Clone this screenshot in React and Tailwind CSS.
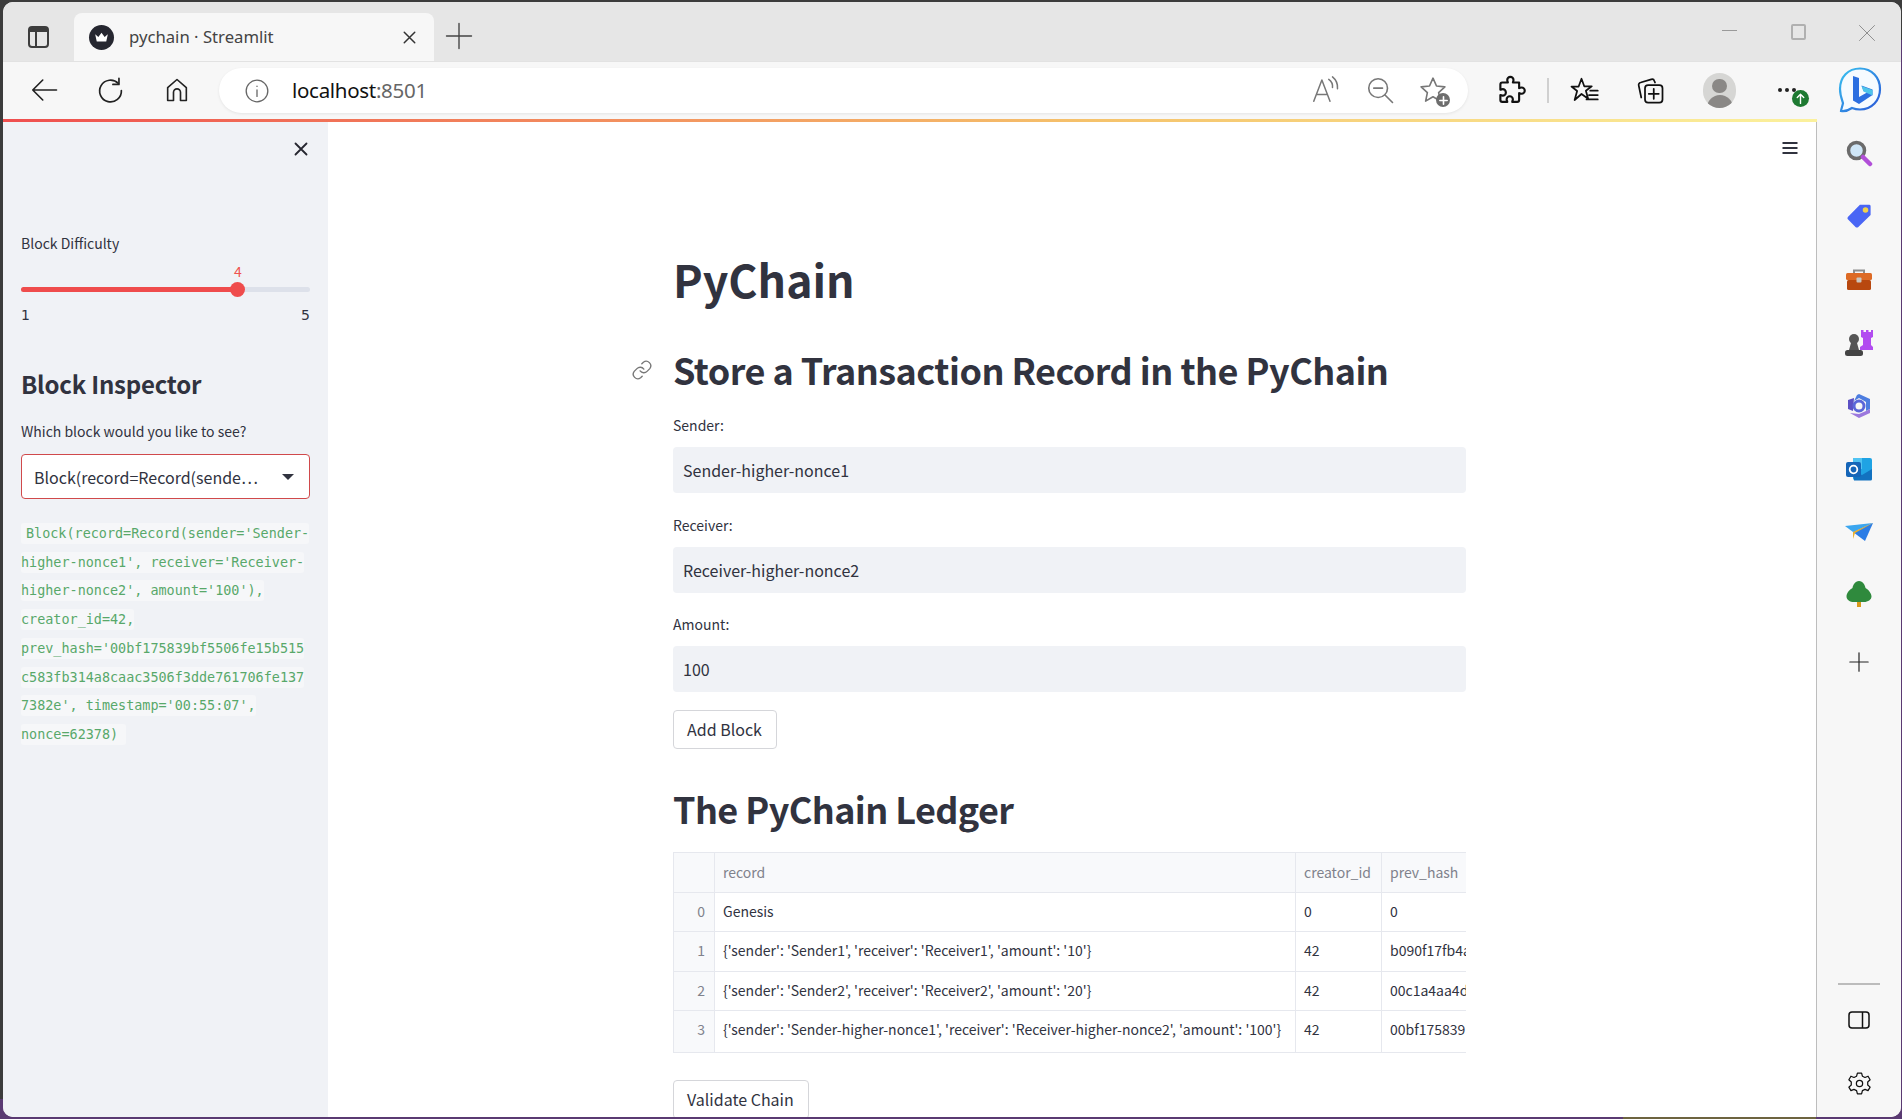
import React from "react";

const SANS = "font-['Noto_Sans_CJK_SC','Source_Sans_Pro',sans-serif]";

function Icon({ className, children, vb = "0 0 24 24", sw = 1.6 }) {
  return (
    <svg className={className} viewBox={vb} fill="none" stroke="currentColor" strokeWidth={sw} strokeLinecap="round" strokeLinejoin="round">
      {children}
    </svg>
  );
}

function ToolIcon({ x, children }) {
  return <div className="absolute top-[70px] h-9 w-9 flex items-center justify-center" style={{ left: x - 18 }}>{children}</div>;
}

function SideIcon({ children, h = 60 }) {
  return <div className="flex items-center justify-center w-full shrink-0" style={{ height: h }}>{children}</div>;
}

function TopBar() {
  return (
    <div className="relative h-[117px] shrink-0">
      <div className="h-[59px] bg-[#e6e6e6] relative">
        <div className="absolute left-[25px] top-[24px] w-[21px] h-[22px] border-2 border-[#3d3d3d] rounded-[4px] bg-[#e6e6e6]">
          <div className="h-[4px] bg-[#3d3d3d]" />
          <div className="absolute left-[5px] top-[2px] bottom-0 w-[2px] bg-[#3d3d3d]" />
        </div>
        <div className="absolute left-[71px] top-[11px] w-[360px] h-[48px] bg-[#f7f7f7] rounded-t-[8px] flex items-center text-[#444]">
          <div className="ml-[15px] w-[25px] h-[25px] rounded-full bg-[#262730] flex items-center justify-center">
            <svg viewBox="0 0 24 24" className="w-[19px] h-[19px]"><path d="M4 8l4 3.5L12 6l4 5.5L20 8l-2 9H6z" fill="#fff" /></svg>
          </div>
          <span className="ml-[15px] text-[16.7px] leading-6 font-['Noto_Sans',sans-serif] text-[#444]">pychain · Streamlit</span>
          <Icon className="w-[21px] h-[21px] ml-auto mr-[14px] text-[#333]" sw={1.7}><path d="M6 6l12 12M18 6L6 18" /></Icon>
        </div>
        <Icon className="absolute left-[441px] top-[19px] w-[30px] h-[30px] text-[#444]" sw={1.1}><path d="M12 2v20M2 12h20" /></Icon>
        <div className="absolute left-[1719px] top-[28px] w-[15px] h-px bg-[#9a9a9a]" />
        <div className="absolute left-[1788px] top-[22px] w-[15px] h-[16px] border-2 border-[#b0b0b0] rounded-[2px]" />
        <Icon className="absolute left-[1854px] top-[21px] w-[20px] h-[20px] text-[#8f8f8f]" sw={1.2}><path d="M3 3l18 18M21 3L3 21" /></Icon>
      </div>
      <div className="h-[58px] bg-[#f7f7f7] relative border-t border-[#e2e2e2]">
        <div className="absolute left-[216px] top-[6px] w-[1249px] h-[45px] rounded-full bg-white shadow-[0_1px_3px_rgba(0,0,0,0.08)] flex items-center">
          <Icon className="ml-[25px] w-[26px] h-[26px] text-[#666]" sw={1.2}><circle cx="12" cy="12" r="10" /><path d="M12 11v6M12 7.5v.3" /></Icon>
          <span className="ml-[22px] pb-[2px] text-[20.5px] leading-6 font-['Noto_Sans',sans-serif] tracking-[-0.3px] text-[#111]">localhost<span className="text-[#666]">:8501</span></span>
        </div>
      </div>
      <ToolIcon x={41}><Icon className="w-[30px] h-[30px] text-[#222]" sw={1.3}><path d="M22 12H3M11 4l-8 8 8 8" /></Icon></ToolIcon>
      <ToolIcon x={107}><Icon className="w-[29px] h-[29px] text-[#222]" sw={1.4}><path d="M18.5 6.2A9 9 0 1 0 21 12" /><path d="M19 2v5h-5" /></Icon></ToolIcon>
      <ToolIcon x={173.5}><Icon className="w-[28px] h-[28px] text-[#222]" sw={1.4}><path d="M4 21V10l8-7 8 7v11h-5v-7a3 3 0 0 0-6 0v7z" /></Icon></ToolIcon>
    </div>
  );
}

function AbsIcons() {
  const t = "absolute";
  return (
    <>
      <Icon className={`${t} left-[1307px] top-[73px] w-[30px] h-[30px] text-[#777]`} sw={1.2}>
        <path d="M3 21L9.500 4 16 21M5.300 15.500h8.400" />
        <path d="M15 3.500a7 7 0 0 1 3 6.500M18 1.500a11 11 0 0 1 4 9.500" />
      </Icon>
      <Icon className={`${t} left-[1362px] top-[73px] w-[30px] h-[30px] text-[#777]`} sw={1.3}><circle cx="10.5" cy="10.5" r="7.5" /><path d="M7 10.5h7M16 16l6 6" /></Icon>
      <div className={`${t} left-[1415px] top-[73px] w-[32px] h-[32px]`}>
        <Icon className="w-[30px] h-[30px] text-[#777]" sw={1.3}><path d="M12 2.5l2.8 6.3 6.7.7-5 4.6 1.4 6.8-5.900-3.5-5.900 3.5 1.4-6.8-5-4.6 6.7-.7z" /></Icon>
        <div className="absolute right-0 bottom-0 w-[14px] h-[14px] rounded-full bg-[#6d6d6d] text-white flex items-center justify-center">
          <Icon className="w-[11px] h-[11px]" sw={3.5}><path d="M12 4v16M4 12h16" /></Icon>
        </div>
      </div>
      <Icon className={`${t} left-[1493px] top-[73px] w-[30px] h-[30px] text-[#111]`} sw={1.7}><path d="M10 4a2.5 2.5 0 0 1 5 0c0 1-.5 1.5-.5 2h5v4.5c.6 0 1.200-.5 2-.5a2.500 2.500 0 0 1 0 5c-.8 0-1.400-.5-2-.5V20a1.500 1.500 0 0 1-1.500 1.500H14c0-.7.5-1.200.5-2a2.500 2.500 0 0 0-5 0c0 .8.5 1.300.5 2H6A1.500 1.500 0 0 1 4.500 20v-4c.6 0 1 .5 1.800.5a2.600 2.600 0 0 0 0-5.200c-.8 0-1.200.5-1.800.5V7.500A1.500 1.500 0 0 1 6 6h4.500c0-.5-.5-1-.5-2z" transform="translate(-1 0)" /></Icon>
      <div className={`${t} left-[1544px] top-[76px] w-[2px] h-[25px] bg-[#d0d0d0]`} />
      <Icon className={`${t} left-[1566px] top-[73px] w-[30px] h-[30px] text-[#111]`} sw={1.4}><path d="M10 3l2.200 6h6l-4.700 3.600 1.800 6.400-5.300-3.800L4.500 20l2-7.200L2 9.200h5.700zM17 12.500h6M16 16h7M14 19.500h9" /></Icon>
      <Icon className={`${t} left-[1632px] top-[73px] w-[30px] h-[30px] text-[#111]`} sw={1.4}><path d="M5 18L3 8.500A2 2 0 0 1 4.500 6L13 3.500a2 2 0 0 1 2.500 1.300L16 6" /><rect x="8" y="8" width="14" height="14" rx="2.500" /><path d="M15 11v8M11 15h8" /></Icon>
      <div className={`${t} left-[1700px] top-[71px] w-[33px] h-[35px] rounded-full bg-[#d6d6d4] overflow-hidden flex flex-col items-center`}>
        <div className="mt-[6px] w-[15px] h-[17px] rounded-full bg-[#8a8886]" />
        <div className="mt-[2px] w-[26px] h-[16px] rounded-t-full bg-[#8a8886]" />
      </div>
      <div className={`${t} left-[1775px] top-[86px] flex gap-[3px]`}>
        <div className="w-[4px] h-[4px] rounded-full bg-[#222]" />
        <div className="w-[4px] h-[4px] rounded-full bg-[#222]" />
        <div className="w-[4px] h-[4px] rounded-full bg-[#222]" />
      </div>
      <div className={`${t} left-[1789px] top-[88px] w-[17px] h-[17px] rounded-full bg-[#1e7a32] text-white flex items-center justify-center`}>
        <Icon className="w-[13px] h-[13px]" sw={2.6}><path d="M12 21V4M6 10l6-6 6 6" /></Icon>
      </div>
      <svg viewBox="0 0 44 46" className={`${t} left-[1835px] top-[65px] w-[44px] h-[46px]`}>
        <defs>
          <linearGradient id="bingb" x1="0" y1="0" x2="1" y2="1"><stop offset="0" stopColor="#39c2f0" /><stop offset="1" stopColor="#2a56d6" /></linearGradient>
        </defs>
        <path d="M22 1.500C10 1.500 2 10 2 22c0 6 2 11 3 14-.500 3-2 7-2 8 3 .5 8-1 11-3 2.500 1 5 1.500 8 1.500 12 0 20-9 20-20.500S34 1.500 22 1.500z" fill="#f6fbff" stroke="url(#bingb)" strokeWidth="2.200" />
        <path d="M15 9l6 2v19l8-4.500-3.500-1.500-2-5.500 11 4v5.500L21 37l-6-3.500z" fill="#2c6fe0" />
        <path d="M25.500 24.500l-2-5.500 11 4v5.500z" fill="#4dc4ea" />
      </svg>
    </>
  );
}

const codeLines = [
  "Block(record=Record(sender='Sender-",
  "higher-nonce1', receiver='Receiver-",
  "higher-nonce2', amount='100'),",
  "creator_id=42,",
  "prev_hash='00bf175839bf5506fe15b515",
  "c583fb314a8caac3506f3dde761706fe137",
  "7382e', timestamp='00:55:07',",
  "nonce=62378) ",
];

function Sidebar() {
  return (
    <aside className={`${SANS} w-[325px] shrink-0 bg-[#f0f2f6] pl-[18px] pr-[18px] text-[#31333f]`}>
      <div className="flex justify-end pt-[16px]">
        <Icon className="w-[22px] h-[22px] mr-[-2px] text-[#262730]" sw={2}><path d="M6 6l12 12M18 6L6 18" /></Icon>
      </div>
      <div className="mt-[72px] text-[14px] leading-[22px]">Block Difficulty</div>
      <div className="relative">
        <div className="mt-[6px] h-[22px] relative text-[14px] leading-[22px] text-[#ef5350]"><span className="absolute left-[213px]">4</span></div>
        <div className="relative h-[5px] mt-[5px] rounded-full bg-[#dde1ea]">
          <div className="h-full w-[216px] rounded-full bg-[#ef4c4c]" />
          <div className="absolute left-[209px] -top-[5px] w-[15px] h-[15px] rounded-full bg-[#ef4c4c]" />
        </div>
        <div className="mt-[12px] flex justify-between text-[14px] leading-[22px] font-['DejaVu_Sans',sans-serif]"><span>1</span><span>5</span></div>
      </div>
      <h3 className="mt-[38px] text-[24px] leading-[40px] font-semibold tracking-[-0.22px]">Block Inspector</h3>
      <div className="mt-[16px] text-[14px] leading-[22px]">Which block would you like to see?</div>
      <div className="mt-[12px] h-[45px] border border-[#d0494b] rounded-[4px] bg-white flex items-center pl-[12px] pr-[15px]">
        <span className="text-[16px] leading-6 flex-1 truncate">Block(record=Record(sende…</span>
        <div className="w-0 h-0 border-l-[6px] border-r-[6px] border-t-[6px] border-l-transparent border-r-transparent border-t-[#31333f]" />
      </div>
      <div className="mt-[21px] font-['DejaVu_Sans_Mono',monospace] text-[13.45px] leading-[28.7px] text-[#58a86a]">
        {codeLines.map((l, i) => (
          <div key={i}><span className={`bg-[#f6f7f9] rounded-[3px] py-[3px] whitespace-pre ${i === 0 ? "pl-[5px]" : ""}`}>{l}</span></div>
        ))}
      </div>
    </aside>
  );
}

function Field({ label, value, mt }) {
  return (
    <div className={mt}>
      <div className="text-[14px] leading-[22px] text-[#31333f]">{label}</div>
      <div className="mt-[11px] h-[46px] rounded-[4px] bg-[#f0f2f6] flex items-center pl-[10px] text-[16px] text-[#31333f]">{value}</div>
    </div>
  );
}

function Btn({ children, className = "" }) {
  return <div className={`flex w-fit items-center border border-[#d5d6da] rounded-[4px] bg-white pl-[13px] pr-[14px] pb-[2px] text-[16px] text-[#31333f] ${className}`}>{children}</div>;
}

const rows = [
  ["0", "Genesis", "0", "0"],
  ["1", "{'sender': 'Sender1', 'receiver': 'Receiver1', 'amount': '10'}", "42", "b090f17fb4a"],
  ["2", "{'sender': 'Sender2', 'receiver': 'Receiver2', 'amount': '20'}", "42", "00c1a4aa4d"],
  ["3", "{'sender': 'Sender-higher-nonce1', 'receiver': 'Receiver-higher-nonce2', 'amount': '100'}", "42", "00bf175839"],
];

function Table() {
  return (
    <div className="mt-[16px] w-[793px] h-[201px] border border-[#e6e8ee] border-r-0 text-[14px] text-[#31333f] overflow-hidden">
      <div className="h-[40px] flex bg-[#f8f9fb] border-b border-[#e6e8ee] text-[#80828c] items-stretch">
        <div className="w-[41px] border-r border-[#e6e8ee]" />
        <div className="w-[581px] border-r border-[#e6e8ee] pl-[8px] flex items-center">record</div>
        <div className="w-[86px] border-r border-[#e6e8ee] pl-[8px] flex items-center">creator_id</div>
        <div className="flex-1 pl-[8px] flex items-center whitespace-nowrap">prev_hash</div>
      </div>
      {rows.map((r, i) => (
        <div key={i} className={`flex items-stretch ${i < 3 ? "border-b border-[#e6e8ee]" : ""}`} style={{ height: i < 3 ? 39.25 : 41 }}>
          <div className={`w-[41px] border-r border-[#e6e8ee] bg-[#f8f9fb] text-[#80828c] flex items-center justify-end pr-[9px] ${i < 3 ? "pb-[1px]" : "pb-[3px]"}`}>{r[0]}</div>
          <div className={`w-[581px] border-r border-[#e6e8ee] pl-[8px] flex items-center whitespace-nowrap overflow-hidden ${i < 3 ? "pb-[1px]" : "pb-[3px]"}`}>{r[1]}</div>
          <div className={`w-[86px] border-r border-[#e6e8ee] pl-[8px] flex items-center ${i < 3 ? "pb-[1px]" : "pb-[3px]"}`}>{r[2]}</div>
          <div className={`w-[84px] pl-[8px] flex items-center whitespace-nowrap overflow-hidden ${i < 3 ? "pb-[1px]" : "pb-[3px]"}`}>{r[3]}</div>
        </div>
      ))}
    </div>
  );
}

function Main() {
  return (
    <main className={`${SANS} relative flex-1 bg-white overflow-hidden pl-[345px] text-[#31333f]`}>
      <svg viewBox="0 0 24 24" className="absolute right-[16px] top-[16px] w-[20px] h-[20px]" fill="none" stroke="#31333f" strokeWidth="2.200"><path d="M3 6h18M3 12h18M3 18h18" /></svg>
      <h1 className="mt-[123px] leading-[68px] font-bold" style={{ fontSize: 44.6 }}>PyChain</h1>
      <div className="relative mt-[28px]">
        <svg viewBox="0 0 24 24" className="absolute -left-[42px] top-[18px] w-[22px] h-[22px]" fill="none" stroke="#777" strokeWidth="1.500" strokeLinecap="round"><path d="M10 13a5 5 0 0 0 7.500.5l3-3a5 5 0 0 0-7-7l-1.700 1.700" /><path d="M14 11a5 5 0 0 0-7.500-.5l-3 3a5 5 0 0 0 7 7l1.700-1.700" /></svg>
        <h2 className="text-[36px] leading-[56px] font-semibold tracking-[-0.54px]">Store a Transaction Record in the PyChain</h2>
      </div>
      <div className="w-[793px]">
        <Field label="Sender:" value="Sender-higher-nonce1" mt="mt-[17px]" />
        <Field label="Receiver:" value="Receiver-higher-nonce2" mt="mt-[21px]" />
        <Field label="Amount:" value="100" mt="mt-[20px]" />
      </div>
      <Btn className="mt-[18px] h-[39px]">Add Block</Btn>
      <h2 className="mt-[31px] text-[36px] leading-[56px] font-semibold tracking-[-0.6px]">The PyChain Ledger</h2>
      <Table />
      <Btn className="mt-[27px] h-[39px]">Validate Chain</Btn>
    </main>
  );
}

function RightRail() {
  return (
    <aside className="w-[85px] shrink-0 bg-[#f7f7f7] border-l border-[#bdbdbd] flex flex-col items-center">
      <SideIcon h={62}>
        <svg viewBox="0 0 28 28" className="w-[28px] h-[28px]"><circle cx="11.500" cy="11.500" r="8" fill="#cfe6f7" stroke="#6b6b6b" strokeWidth="3.500" /><path d="M18 18l7 7" stroke="#b14fd8" strokeWidth="4.500" strokeLinecap="round" /></svg>
      </SideIcon>
      <SideIcon h={64}>
        <svg viewBox="0 0 28 28" className="w-[26px] h-[26px]"><path d="M15 2h10a1.500 1.500 0 0 1 1.500 1.500V13L13 26a2 2 0 0 1-2.500 0L2 17.500a2 2 0 0 1 0-2.500z" fill="#4a66f5" /><circle cx="21" cy="7.500" r="3" fill="#f2d24b" /></svg>
      </SideIcon>
      <SideIcon h={64}>
        <svg viewBox="0 0 28 24" className="w-[28px] h-[24px]"><path d="M9 5V2.500h10V5" fill="none" stroke="#8d8d8d" strokeWidth="2" /><rect x="1" y="5" width="26" height="7" rx="1.500" fill="#dd6a25" /><rect x="2" y="12" width="24" height="10" rx="1.500" fill="#b8480f" /><rect x="11.500" y="9.500" width="5" height="5" rx="1" fill="#cbc5bd" /></svg>
      </SideIcon>
      <SideIcon h={62}>
        <svg viewBox="0 0 28 26" className="w-[28px] h-[26px]"><circle cx="9" cy="9" r="5" fill="#555" /><path d="M6 13h6l2 7H4z" fill="#555" /><rect x="0" y="20" width="18" height="6" rx="2.500" fill="#444" /><path d="M16 0h2.500v2H21V0h2.500v2H26V0h2v7l-2 1v7l2 2v3H15v-3l3-2V8l-2-1z" fill="#b24cf0" /></svg>
      </SideIcon>
      <SideIcon h={64}>
        <svg viewBox="0 0 26 26" className="w-[26px] h-[26px]"><path d="M13 1l11 5v10l-4 2V9l-7-4-5 3 3-6z" fill="#4d7de0" /><path d="M24 16v4L13 25 4 20l9 1 7-3z" fill="#9c78dd" /><path d="M2 7l6-2-1 13-5-2z" fill="#5b50c4" /><circle cx="13" cy="13" r="5" fill="none" stroke="#5a66d8" strokeWidth="3" /></svg>
      </SideIcon>
      <SideIcon h={62}>
        <svg viewBox="0 0 26 24" className="w-[26px] h-[24px]"><rect x="7" y="1" width="19" height="22" rx="2" fill="#1fa3e4" /><path d="M7 1h9v11H7z" fill="#50c3f2" /><path d="M7 14l9 4 10-6v10a1.500 1.500 0 0 1-1.500 1.500H8z" fill="#1272c0" /><rect x="0" y="5" width="15" height="15" rx="2" fill="#1565b8" /><circle cx="7.500" cy="12.500" r="3.800" fill="none" stroke="#fff" strokeWidth="1.800" /></svg>
      </SideIcon>
      <SideIcon h={65}>
        <svg viewBox="0 0 28 20" className="w-[28px] h-[20px]"><path d="M0 3l8 6 20-9z" fill="#3ba6ef" /><path d="M8 9l20-9-8 18z" fill="#2b7de6" /><path d="M8 9l20-9-18 10-2 6z" fill="#e9b02f" /></svg>
      </SideIcon>
      <SideIcon h={58}>
        <svg viewBox="0 0 26 26" className="w-[26px] h-[26px]"><path d="M11 19h4v7h-4z" fill="#d99a1c" /><path d="M13 0c4 0 6 4 6.500 7 3 1.500 6 5.500 6 8.500S22 21 18 21H8c-4 0-7.500-2-7.500-5.500S3.500 8.500 6.500 7C7 4 9 0 13 0z" fill="#2f8a3d" /></svg>
      </SideIcon>
      <SideIcon h={78}>
        <Icon className="w-[22px] h-[22px] text-[#222]" sw={1.300}><path d="M12 2v20M2 12h20" /></Icon>
      </SideIcon>
      <div className="flex-1" />
      <div className="w-[42px] h-[2px] bg-[#bcbcbc]" />
      <SideIcon h={70}>
        <svg viewBox="0 0 22 18" className="w-[22px] h-[18px]" fill="none" stroke="#111" strokeWidth="1.500"><rect x="1" y="1" width="20" height="16" rx="3" /><path d="M14.500 1v16" /></svg>
      </SideIcon>
      <SideIcon h={56}>
        <svg viewBox="0 0 24 24" className="w-[25px] h-[25px]" fill="none" stroke="#111" strokeWidth="1.200" strokeLinejoin="round"><circle cx="12" cy="12" r="3" /><path d="M10 2h4l.8 3 2.500 1.200 2.900-1.200 2 3.400-2.300 2.100v2.900l2.300 2.100-2 3.400-2.900-1.200-2.500 1.200-.8 3h-4l-.8-3-2.500-1.200-2.900 1.200-2-3.400 2.300-2.100v-2.900L1.800 8.400l2-3.400 2.900 1.200L9.200 5z" /></svg>
      </SideIcon>
      <div className="h-[6px]" />
    </aside>
  );
}

export default function App() {
  return (
    <div className="relative w-[1902px] h-[1119px] overflow-hidden bg-[#5a3a72]">
      <div className="absolute inset-x-0 top-0 h-[40px] bg-[#3c3c3c]" />
      <div className="absolute left-0 top-0 bottom-[20px] w-[3px] bg-[#3c3c3c]" />
      <div className="absolute left-[1623px] right-[86px] bottom-0 h-[2px] bg-[#6d6440]" />
      <div className="relative pt-[2px] pl-[3px] pr-px h-[1117px]">
        <div className="relative h-[1115px] w-full rounded-[10px] overflow-hidden flex flex-col bg-[#f7f7f7]">
          <TopBar />
          <AbsIcons />
          <div className="h-[3px] shrink-0 mr-[84px] bg-[linear-gradient(90deg,#ef4f4f,#f5c26b_60%,#fbf19d)]" />
          <div className="flex-1 min-h-0 flex overflow-hidden">
            <Sidebar />
            <Main />
            <RightRail />
          </div>
        </div>
      </div>
    </div>
  );
}
